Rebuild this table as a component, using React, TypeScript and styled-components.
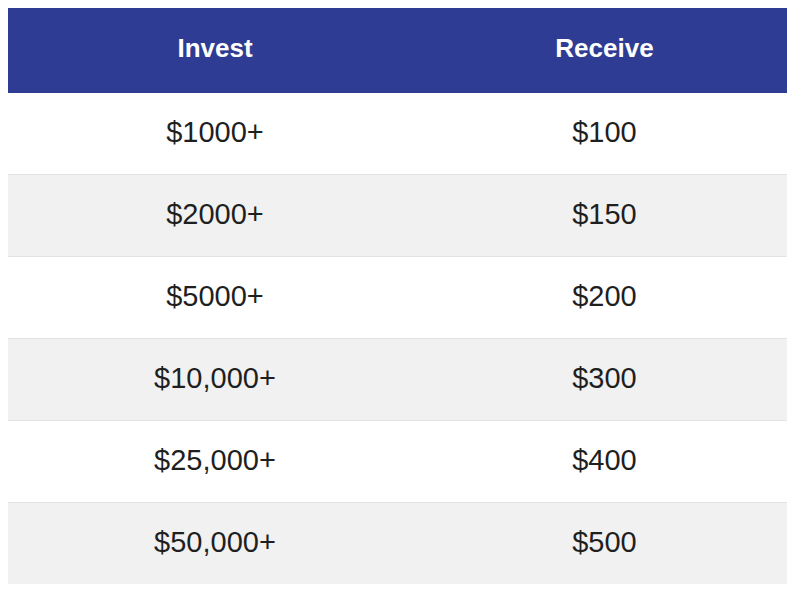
import React from "react";
import styled, { createGlobalStyle } from "styled-components";

const Global = createGlobalStyle`
  html, body { margin: 0; padding: 0; background: #ffffff; }
  body { padding: 8px; font-family: "Liberation Sans", Arial, sans-serif; }
`;

const Table = styled.table`
  width: 779px;
  border-collapse: collapse;
  table-layout: fixed;
  font-family: "Liberation Sans", Arial, sans-serif;
`;

const HeadCell = styled.th<{ $w: number }>`
  width: ${(p) => p.$w}px;
  height: 80px;
  padding: 0 0 5px;
  background: #2e3d93;
  color: #ffffff;
  font-size: 26px;
  font-weight: 700;
  text-align: center;
`;

const Row = styled.tr<{ $striped: boolean }>`
  background: ${(p) => (p.$striped ? "#f1f1f1" : "#ffffff")};
  border-top: 1px solid #e2e2e2;
  &:first-child { border-top: none; }
`;

const Cell = styled.td`
  height: 79px;
  padding: 0 0 2px;
  text-align: center;
  font-size: 29px;
  color: #1f1f1f;
`;

const rows: [string, string][] = [
  ["$1000+", "$100"],
  ["$2000+", "$150"],
  ["$5000+", "$200"],
  ["$10,000+", "$300"],
  ["$25,000+", "$400"],
  ["$50,000+", "$500"],
];

export default function App() {
  return (
    <>
      <Global />
      <Table>
        <thead>
          <tr>
            <HeadCell $w={414}>Invest</HeadCell>
            <HeadCell $w={365}>Receive</HeadCell>
          </tr>
        </thead>
        <tbody>
          {rows.map(([a, b], i) => (
            <Row key={a} $striped={i % 2 === 1}>
              <Cell>{a}</Cell>
              <Cell>{b}</Cell>
            </Row>
          ))}
        </tbody>
      </Table>
    </>
  );
}
